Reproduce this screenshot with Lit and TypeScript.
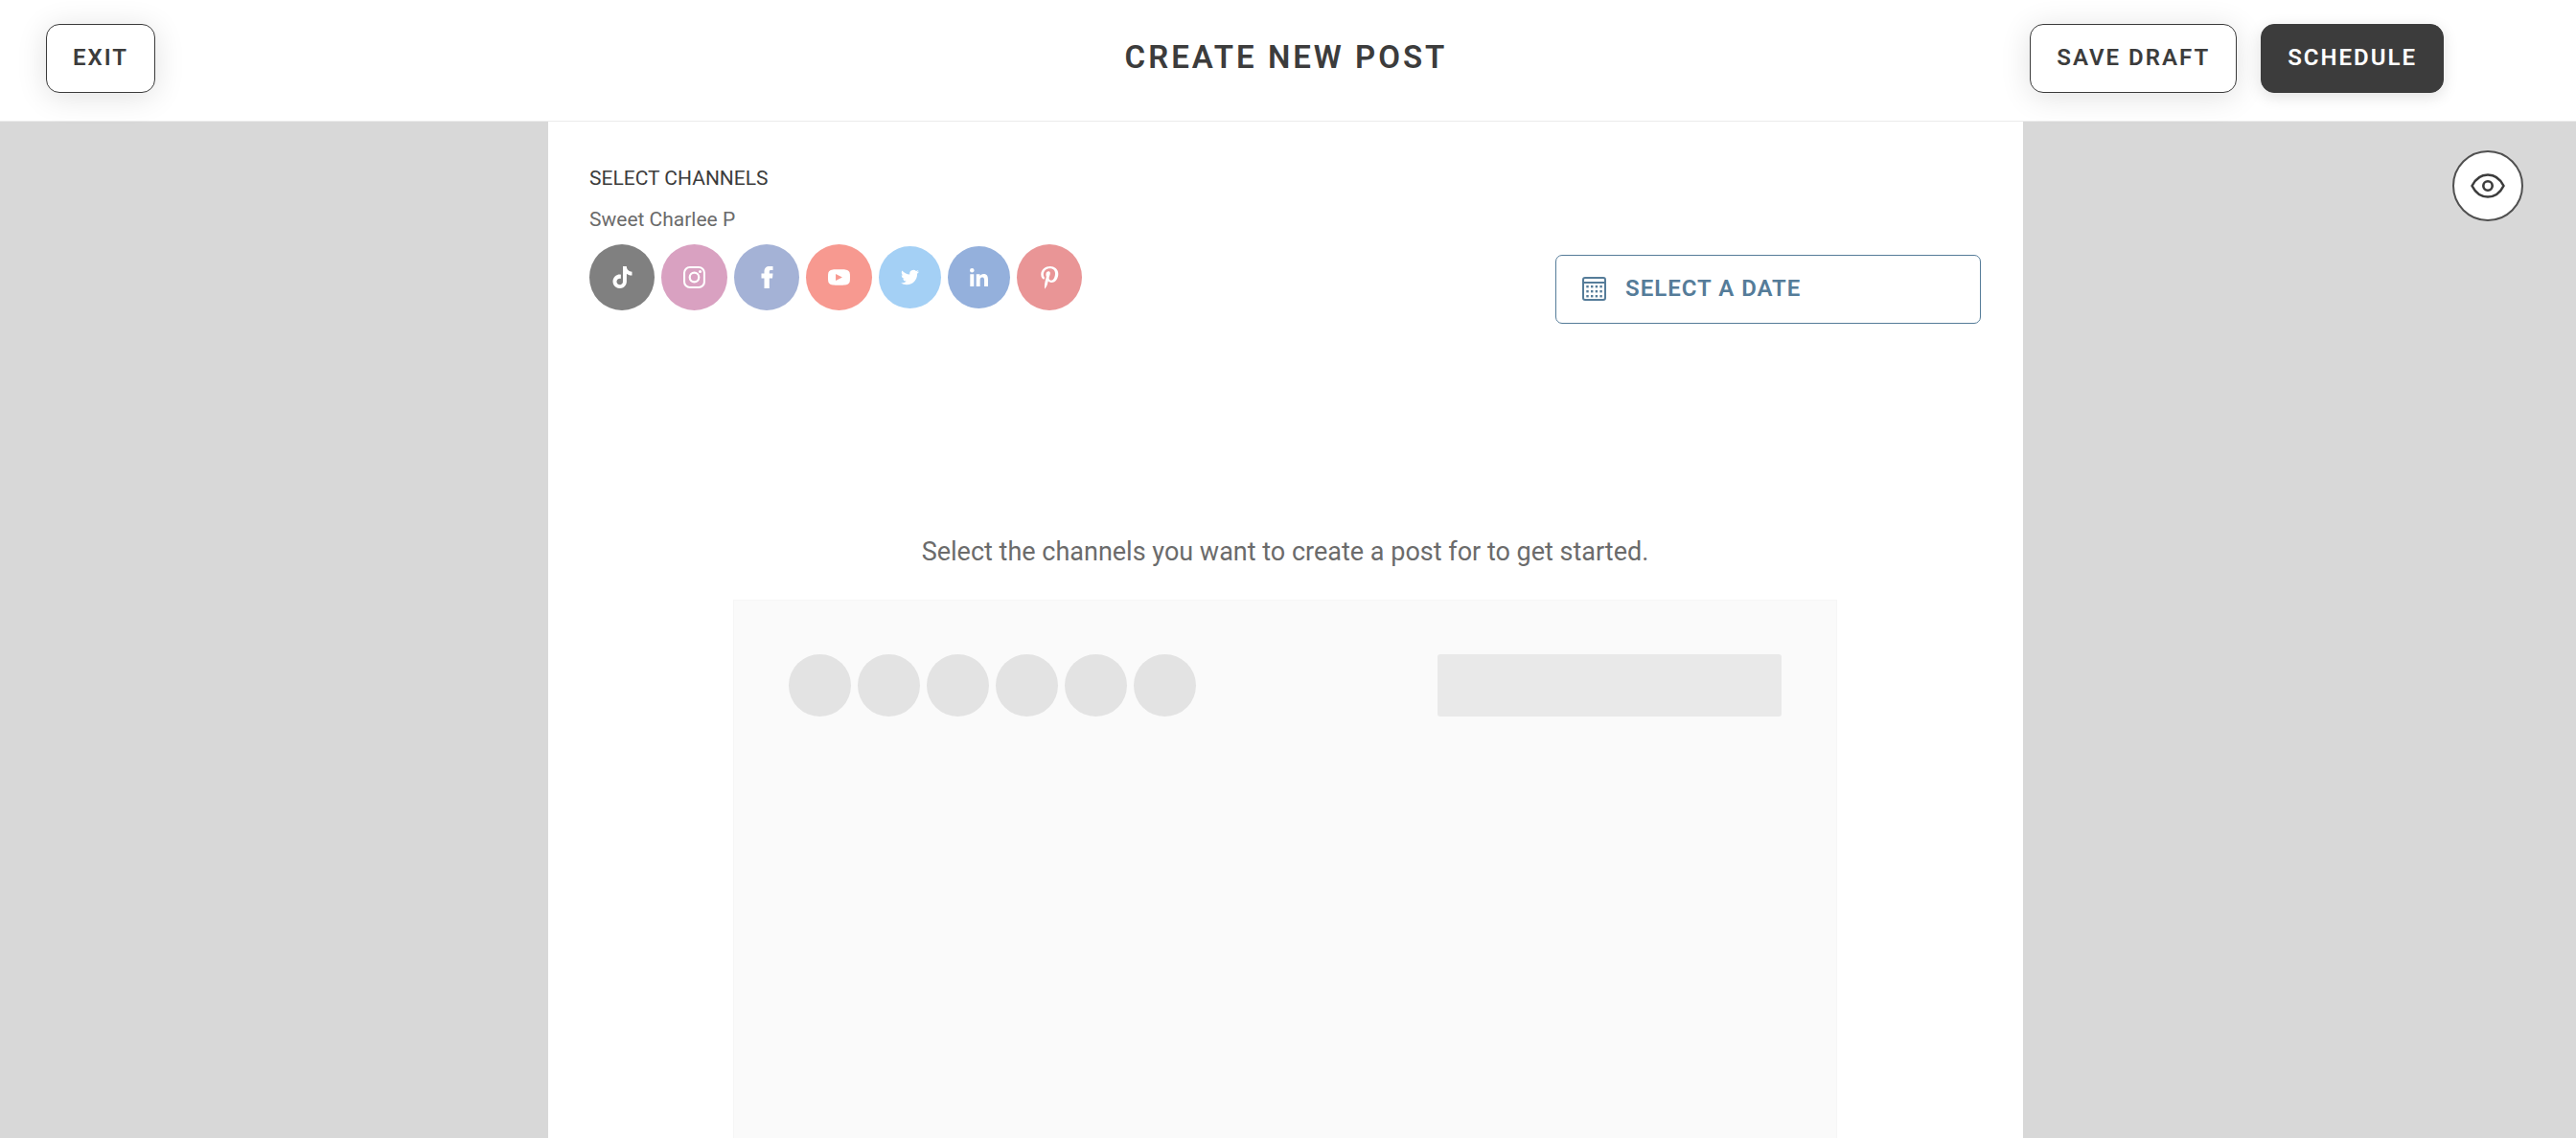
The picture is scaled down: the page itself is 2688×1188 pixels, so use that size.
import { LitElement, html, css, svg, TemplateResult } from "lit";
import { customElement, property, state } from "lit/decorators.js";
import { classMap } from "lit/directives/class-map.js";

interface Channel {
  id: string;
  label: string;
  size: "small" | "medium" | "large";
  viewBox: string;
  glyph: TemplateResult;
}

const CHANNELS: Channel[] = [
  {
    id: "tiktok",
    label: "TikTok",
    size: "medium",
    viewBox: "0 0 24 24",
    glyph: svg`<path d="M12.525.02c1.31-.02 2.61-.01 3.91-.02.08 1.53.63 3.09 1.75 4.17 1.12 1.11 2.7 1.62 4.24 1.79v4.03c-1.44-.05-2.89-.35-4.2-.97-.57-.26-1.1-.59-1.62-.93-.01 2.92.01 5.84-.02 8.75-.08 1.4-.54 2.79-1.35 3.94-1.31 1.92-3.58 3.17-5.91 3.21-1.43.08-2.86-.31-4.08-1.03-2.02-1.19-3.44-3.37-3.65-5.71-.02-.5-.03-1-.01-1.49.18-1.9 1.12-3.72 2.58-4.96 1.66-1.44 3.98-2.13 6.15-1.72.02 1.48-.04 2.96-.04 4.44-.99-.32-2.15-.23-3.02.37-.63.41-1.11 1.04-1.36 1.75-.21.51-.15 1.07-.14 1.61.24 1.64 1.82 3.02 3.5 2.87 1.12-.01 2.19-.66 2.77-1.61.19-.33.4-.67.41-1.06.1-1.79.06-3.57.07-5.36.01-4.03-.01-8.05.02-12.07z"/>`,
  },
  {
    id: "instagram",
    label: "Instagram",
    size: "large",
    viewBox: "0 0 24 24",
    glyph: svg`<rect x="1.1" y="1.1" width="21.8" height="21.8" rx="6" fill="none" stroke="currentColor" stroke-width="2.2"/><circle cx="12" cy="12" r="5" fill="none" stroke="currentColor" stroke-width="2.3"/><circle cx="18.3" cy="5.7" r="1.6"/>`,
  },
  {
    id: "facebook",
    label: "Facebook",
    size: "medium",
    viewBox: "-5.5 0 23 23",
    glyph: svg`<path d="M3 23V12.5H0V7.5H3V5.6C3 2 5 0 8.4 0H12V4.1H9.9C8.7 4.1 8.3 4.7 8.3 5.8V7.5H12L11.5 12.5H8.3V23Z"/>`,
  },
  {
    id: "youtube",
    label: "YouTube",
    size: "large",
    viewBox: "0 0 24 24",
    glyph: svg`<path fill-rule="evenodd" d="M5.2 3.6C7.4 3.3 16.6 3.3 18.8 3.6C22.2 3.9 23.7 5.6 23.9 8.6C24 10.6 24 13.4 23.9 15.4C23.7 18.4 22.2 20.1 18.8 20.4C16.6 20.7 7.4 20.7 5.2 20.4C1.8 20.1 .3 18.4 .1 15.4C0 13.4 0 10.6 .1 8.6C.3 5.6 1.8 3.9 5.2 3.6ZM8.4 8.4V15.6L15.6 12Z"/>`,
  },
  {
    id: "twitter",
    label: "Twitter",
    size: "small",
    viewBox: "0 0 24 24",
    glyph: svg`<path d="M23.953 4.57a10 10 0 01-2.825.775 4.958 4.958 0 002.163-2.723c-.951.555-2.005.959-3.127 1.184a4.92 4.92 0 00-8.384 4.482C7.69 8.095 4.067 6.13 1.64 3.162a4.822 4.822 0 00-.666 2.475c0 1.71.87 3.213 2.188 4.096a4.904 4.904 0 01-2.228-.616v.06a4.923 4.923 0 003.946 4.827 4.996 4.996 0 01-2.212.085 4.936 4.936 0 004.604 3.417 9.867 9.867 0 01-6.102 2.105c-.39 0-.779-.023-1.17-.067a13.995 13.995 0 007.557 2.209c9.053 0 13.998-7.496 13.998-13.985 0-.21 0-.42-.015-.63A9.935 9.935 0 0024 4.59z"/>`,
  },
  {
    id: "linkedin",
    label: "LinkedIn",
    size: "small",
    viewBox: "0 0 448 448",
    glyph: svg`<path d="M100.28 448H7.4V148.9h92.88zM53.79 108.1C24.09 108.1 0 83.5 0 53.8a53.79 53.79 0 0 1 107.58 0c0 29.7-24.1 54.3-53.79 54.3zM447.9 448h-92.68V302.4c0-34.7-.7-79.2-48.29-79.2-48.29 0-55.69 37.7-55.69 76.7V448h-92.78V148.9h89.08v40.8h1.3c12.4-23.5 42.69-48.3 87.88-48.3 94 0 111.28 61.9 111.28 142.3V448z"/>`,
  },
  {
    id: "pinterest",
    label: "Pinterest",
    size: "medium",
    viewBox: "-48 6 490 490",
    glyph: svg`<path d="M204 6.5C101.4 6.5 0 74.9 0 185.6 0 256 39.6 296 63.6 296c9.9 0 15.6-27.6 15.6-35.4 0-9.3-23.7-29.1-23.7-67.8 0-80.4 61.2-137.4 140.4-137.4 68.1 0 118.5 38.7 118.5 109.8 0 53.1-21.3 152.7-90.3 152.7-24.9 0-46.2-18-46.2-43.8 0-37.8 26.4-74.4 26.4-113.4 0-66.2-93.9-54.2-93.9 25.8 0 16.8 2.1 35.4 9.6 50.7-13.8 59.4-42 147.9-42 209.1 0 18.9 2.7 37.5 4.5 56.4 3.4 3.8 1.7 3.4 6.9 1.5 50.4-69 48.6-82.5 71.4-172.8 12.3 23.4 44.1 36 69.3 36 106.2 0 153.9-103.5 153.9-196.8C384 71.3 298.2 6.5 204 6.5z"/>`,
  },
];

@customElement("channel-button")
export class ChannelButton extends LitElement {
  @property({ attribute: false }) channel!: Channel;
  @property({ type: Boolean }) selected = false;

  static styles = css`
    :host {
      display: block;
    }
    .channel {
      display: grid;
      place-items: center;
      width: 68px;
      height: 69px;
      padding: 0;
      border: 0;
      border-radius: 50%;
      color: #fff;
      cursor: pointer;
    }
    .large {
      width: 69px;
    }
    .small {
      width: 65px;
      height: 65px;
    }
    .glyph {
      display: block;
      width: 23px;
      height: 23px;
      fill: currentColor;
      overflow: visible;
    }
    .small .glyph {
      width: 19px;
      height: 19px;
    }
    .selected {
      outline: 3px solid #3c3c3c;
    }
    .tiktok { background: #808080; }
    .instagram { background: #d9a1c1; }
    .facebook { background: #a4b2d6; }
    .youtube { background: #f79990; }
    .twitter { background: #a4d0f5; }
    .linkedin { background: #94b0dc; }
    .pinterest { background: #e99596; }
  `;

  render() {
    const c = this.channel;
    return html`<button
      type="button"
      class=${classMap({ channel: true, [c.size]: true, [c.id]: true, selected: this.selected })}
      aria-label=${c.label}
      aria-pressed=${this.selected}
    >
      <svg class="glyph" viewBox=${c.viewBox} aria-hidden="true">${c.glyph}</svg>
    </button>`;
  }
}

@customElement("app-root")
export class AppRoot extends LitElement {
  @state() private selected = new Set<string>();

  static styles = css`
    :host {
      display: flex;
      flex-direction: column;
      min-height: 100vh;
      background: #d8d8d8;
      color: #3c3c3c;
      font-family: Roboto, "Liberation Sans", sans-serif;
    }
    * {
      box-sizing: border-box;
    }
    .topbar {
      display: grid;
      grid-template-columns: 1fr auto 1fr;
      align-items: start;
      padding: 25px 138px 29px 48px;
      background: #fff;
      border-bottom: 1px solid #ebebeb;
    }
    .title {
      margin: 0 0 0 86px;
      font-size: 33px;
      line-height: 70px;
      font-weight: 600;
      letter-spacing: 3px;
    }
    .actions {
      display: flex;
      justify-content: flex-end;
      gap: 25px;
    }
    .btn {
      height: 72px;
      padding: 0 27px 2px;
      border: 1px solid #3c3c3c;
      border-radius: 14px;
      background: #fff;
      color: inherit;
      font: inherit;
      font-size: 24px;
      font-weight: 600;
      letter-spacing: 2px;
      box-shadow: 0 4px 32px rgba(0, 0, 0, 0.12);
      cursor: pointer;
    }
    .exit {
      justify-self: start;
    }
    .primary {
      background: #3c3c3c;
      color: #fff;
      box-shadow: 0 4px 16px rgba(0, 0, 0, 0.12);
    }
    .stage {
      flex: 1;
      display: grid;
      grid-template-columns: 1fr minmax(0, 1539px) 1fr;
      padding-right: 5px;
    }
    .editor {
      grid-column: 2;
      display: flex;
      flex-direction: column;
      padding: 46px 44px 0 43px;
      background: #fff;
    }
    .setup {
      display: flex;
      justify-content: space-between;
      align-items: flex-end;
    }
    .heading,
    .account {
      margin: 0;
      font-size: 21px;
      line-height: 26px;
      font-weight: 400;
    }
    .account {
      margin: 17px 0 13px;
      color: #6b6b6b;
    }
    .channels {
      display: flex;
      align-items: center;
      gap: 7px;
      margin: 0 0 14px;
      padding: 0;
      list-style: none;
    }
    .date {
      display: flex;
      align-items: center;
      gap: 20px;
      width: 444px;
      height: 72px;
      padding: 0 27px 2px;
      border: 1px solid #557c99;
      border-radius: 7px;
      background: #fff;
      color: #557c99;
      font: inherit;
      font-size: 24px;
      font-weight: 600;
      letter-spacing: 1px;
      cursor: pointer;
    }
    .calendar {
      width: 25px;
      height: 25px;
    }
    .message {
      margin: 220px 0 32px;
      color: #6b6b6b;
      font-size: 27px;
      line-height: 36px;
      text-align: center;
    }
    .skeleton {
      flex: 1;
      display: flex;
      justify-content: space-between;
      align-items: flex-start;
      align-self: center;
      width: 1152px;
      max-width: 100%;
      padding: 56px 57px 0;
      border: 1px solid #f6f6f6;
      border-bottom: 0;
      background: #fafafa;
    }
    .dots {
      display: flex;
      gap: 7px;
    }
    .dot {
      width: 65px;
      height: 65px;
      border-radius: 50%;
      background: #e3e3e3;
    }
    .bar {
      width: 359px;
      height: 65px;
      border-radius: 3px;
      background: #e9e9e9;
    }
    .preview {
      justify-self: end;
      display: grid;
      place-items: center;
      width: 74px;
      height: 74px;
      margin: 30px 50px 0 0;
      padding: 0;
      border: 2px solid #505050;
      border-radius: 50%;
      background: #fff;
      color: #3c3c3c;
      cursor: pointer;
    }
    .eye {
      width: 36px;
      height: 26px;
    }
  `;

  private toggle(id: string) {
    const next = new Set(this.selected);
    if (!next.delete(id)) next.add(id);
    this.selected = next;
  }

  private calendarIcon() {
    const dots = [9, 14, 19].flatMap((y) => [4.3, 9, 13.7, 18.4].map((x) => [x, y]));
    return html`<svg class="calendar" viewBox="0 0 25 25" fill="none" stroke="currentColor" stroke-width="2" aria-hidden="true">
      <rect x="1" y="1" width="23" height="23" rx="2" />
      <path d="M1 6H24" />
      ${dots.map(([x, y]) => svg`<rect x=${x} y=${y} width="2.4" height="2.4" fill="currentColor" stroke="none" />`)}
    </svg>`;
  }

  render() {
    return html`
      <header class="topbar">
        <button class="btn exit" type="button">EXIT</button>
        <h1 class="title">CREATE NEW POST</h1>
        <div class="actions">
          <button class="btn" type="button">SAVE DRAFT</button>
          <button class="btn primary" type="button">SCHEDULE</button>
        </div>
      </header>
      <main class="stage">
        <section class="editor">
          <div class="setup">
            <div>
              <h2 class="heading">SELECT CHANNELS</h2>
              <p class="account">Sweet Charlee P</p>
              <ul class="channels">
                ${CHANNELS.map(
                  (c) => html`<li>
                    <channel-button
                      .channel=${c}
                      .selected=${this.selected.has(c.id)}
                      @click=${() => this.toggle(c.id)}
                    ></channel-button>
                  </li>`
                )}
              </ul>
            </div>
            <button class="date" type="button">${this.calendarIcon()}<span>SELECT A DATE</span></button>
          </div>
          <p class="message">Select the channels you want to create a post for to get started.</p>
          <div class="skeleton" aria-hidden="true">
            <div class="dots">${Array.from({ length: 6 }, () => html`<span class="dot"></span>`)}</div>
            <span class="bar"></span>
          </div>
        </section>
        <button class="preview" type="button" aria-label="Preview post">
          <svg class="eye" viewBox="0 0 36 26" fill="none" stroke="currentColor" stroke-width="2.6" stroke-linejoin="round" aria-hidden="true">
            <path d="M1.5 13C5 6 11 1.500 18 1.500S31 6 34.500 13C31 20 25 24.500 18 24.500S5 20 1.500 13Z" />
            <circle cx="18" cy="13" r="4.7" />
          </svg>
        </button>
      </main>
    `;
  }
}
